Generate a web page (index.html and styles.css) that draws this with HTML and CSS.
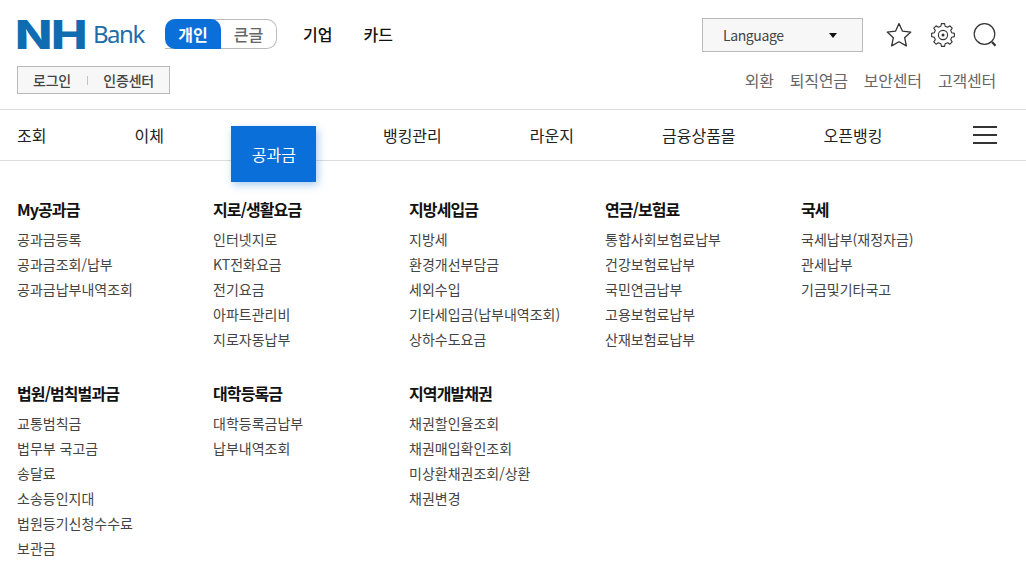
FILE: index.html
```html
<!DOCTYPE html>
<html lang="ko">
<head>
<meta charset="utf-8">
<title>NH Bank</title>
<link rel="stylesheet" href="styles.css">
</head>
<body>
<header class="top">
  <div class="top-row">
    <div class="brand"><span class="brand-nh">NH</span><span class="brand-bank">Bank</span></div>
    <div class="toggle"><span class="toggle-on">개인</span><span class="toggle-off">큰글</span></div>
    <a class="seg">기업</a>
    <a class="seg">카드</a>
    <div class="lang"><span>Language</span><i class="caret"></i></div>
    <div class="icons">
      <svg class="icon-star" width="26" height="26" viewBox="0 0 26 26" fill="none" stroke="#333" stroke-width="1.300"><path d="M13 1.500l3.500 7.700 8.300.9-6.200 5.600 1.800 8.200-7.400-4.200-7.400 4.200 1.800-8.200-6.200-5.600 8.300-.9z" stroke-linejoin="round"/></svg>
      <svg class="icon-gear" width="26" height="26" viewBox="0 0 26 26" fill="none" stroke="#333" stroke-width="1.100"><path d="M10.820 4.270L11.400 1.610H14.600L15.180 4.270L17.640 5.290L19.920 3.810L22.190 6.080L20.710 8.360L21.730 10.820L24.390 11.400V14.600L21.730 15.180L20.710 17.640L22.190 19.920L19.920 22.190L17.640 20.710L15.180 21.730L14.600 24.390H11.400L10.820 21.730L8.360 20.710L6.080 22.190L3.810 19.920L5.290 17.640L4.270 15.180L1.610 14.600V11.400L4.270 10.820L5.290 8.360L3.810 6.080L6.080 3.810L8.360 5.290Z" stroke-linejoin="round"/><circle cx="13" cy="13" r="4.600"/><circle cx="13" cy="13" r="1.500" fill="#333" stroke="none"/></svg>
      <svg class="icon-search" width="26" height="26" viewBox="0 0 26 26" fill="none" stroke="#333" stroke-width="1.200"><circle cx="13.500" cy="12" r="10.300"/><path d="M21 20l3.500 3.800" stroke-width="2.200"/></svg>
    </div>
  </div>
  <div class="sub-row">
    <div class="login"><span>로그인</span><i class="sep"></i><span>인증센터</span></div>
    <nav class="util"><a>외환</a><a>퇴직연금</a><a>보안센터</a><a>고객센터</a></nav>
  </div>
</header>
<nav class="gnb">
  <a>조회</a><a>이체</a><a class="active">공과금</a><a>뱅킹관리</a><a>라운지</a><a>금융상품몰</a><a>오픈뱅킹</a>
  <span class="burger"><i></i><i></i><i></i></span>
</nav>
<main class="menu">
  <section><h3>My공과금</h3><a>공과금등록</a><a>공과금조회/납부</a><a>공과금납부내역조회</a></section>
  <section><h3>지로/생활요금</h3><a>인터넷지로</a><a>KT전화요금</a><a>전기요금</a><a>아파트관리비</a><a>지로자동납부</a></section>
  <section><h3>지방세입금</h3><a>지방세</a><a>환경개선부담금</a><a>세외수입</a><a>기타세입금(납부내역조회)</a><a>상하수도요금</a></section>
  <section><h3>연금/보험료</h3><a>통합사회보험료납부</a><a>건강보험료납부</a><a>국민연금납부</a><a>고용보험료납부</a><a>산재보험료납부</a></section>
  <section><h3>국세</h3><a>국세납부(재정자금)</a><a>관세납부</a><a>기금및기타국고</a></section>
  <section><h3>법원/범칙벌과금</h3><a>교통범칙금</a><a>법무부 국고금</a><a>송달료</a><a>소송등인지대</a><a>법원등기신청수수료</a><a>보관금</a></section>
  <section><h3>대학등록금</h3><a>대학등록금납부</a><a>납부내역조회</a></section>
  <section><h3>지역개발채권</h3><a>채권할인율조회</a><a>채권매입확인조회</a><a>미상환채권조회/상환</a><a>채권변경</a></section>
</main>
</body>
</html>
```
FILE: styles.css
```css
* { box-sizing: border-box; }
html, body { margin: 0; padding: 0; height: 576px; overflow: hidden; background: #fff; }
body { font-family: "Noto Sans CJK KR", "Noto Sans", sans-serif; color: #222; font-size: 14px; }
a { color: inherit; text-decoration: none; }
i { display: block; }

.top { padding: 18px 29px 0 17px; height: 110px; border-bottom: 1px solid #dcdcdc; }
.top-row { display: flex; align-items: center; height: 34px; }
.brand { display: flex; align-items: center; width: 148px; height: 34px; }
.brand-nh { font-family: Inter, sans-serif; font-weight: 800; font-size: 39px; line-height: 34px; color: #0f6cb0; letter-spacing: -1px; width: 78px; transform: scaleX(1.250); transform-origin: 0 50%; margin-left: -2px; }
.brand-bank { font-family: "Noto Sans", sans-serif; font-size: 24px; line-height: 34px; color: #1c6ea8; letter-spacing: -1.500px; margin-top: -2px; }
.toggle { display: flex; width: 112px; height: 30px; margin-top: -2px; border: 1px solid #bbb; border-left: 0; border-radius: 10px 10px 10px 0; font-size: 16px; font-weight: 700; }
.toggle span { display: flex; align-items: center; justify-content: center; }
.toggle-on { width: 56px; margin: -1px 0; background: #0a6fd8; color: #fff; border-radius: 10px 10px 0 10px; }
.toggle-off { flex: 1; color: #666; font-weight: 500; }
.seg { margin-left: 26px; font-size: 16px; font-weight: 500; color: #111; margin-top: -2px; }
.seg + .seg { margin-left: 31px; }
.lang { margin-left: auto; width: 161px; height: 34px; padding: 0 25px 0 20px; display: flex; align-items: center; justify-content: space-between; background: #f7f7f7; border: 1px solid #b9b9b9; font-size: 14px; color: #444; letter-spacing: -0.400px; }
.caret { width: 0; height: 0; border: 4px solid transparent; border-top: 5px solid #111; border-bottom: 0; }
.icons { display: flex; align-items: center; gap: 15px; margin-left: 23px; }
.icon-star { margin-right: 3px; }

.sub-row { display: flex; justify-content: space-between; align-items: center; margin-top: 14px; height: 28px; }
.login { display: flex; align-items: center; width: 153px; height: 28px; padding: 0 15px 0 15px; background: #f7f7f7; border: 1px solid #b9b9b9; font-size: 14px; font-weight: 500; color: #444; letter-spacing: -0.200px; justify-content: space-between; }
.sep { width: 1px; height: 9px; background: #c4c4c4; }
.util { display: flex; gap: 16px; font-size: 16px; color: #666; letter-spacing: -0.200px; margin-right: 1px; }

.gnb { display: flex; align-items: center; height: 51px; padding: 0 29px 0 17px; border-bottom: 1px solid #dcdcdc; font-size: 16px; gap: 88px; color: #222; }
.gnb .active { position: relative; z-index: 1; width: 85px; height: 56px; margin: 38px -21px 0; padding-left: 1px; background: #0a6fd8; color: #fff; display: flex; align-items: center; justify-content: center; box-shadow: 2px 3px 8px rgba(10, 111, 216, .35); }
.burger { margin-left: auto; width: 24px; display: flex; flex-direction: column; gap: 6px; }
.burger i { height: 2px; background: #333; }

.menu { display: grid; grid-template-columns: repeat(5, 196px); padding: 36px 0 0 17px; row-gap: 29px; }
.menu section { display: flex; flex-direction: column; }
.menu h3 { margin: 0 0 5px; font-size: 16px; line-height: 25px; font-weight: 700; color: #111; letter-spacing: -0.900px; }
.menu a { font-size: 14px; line-height: 25px; color: #444; }
```
